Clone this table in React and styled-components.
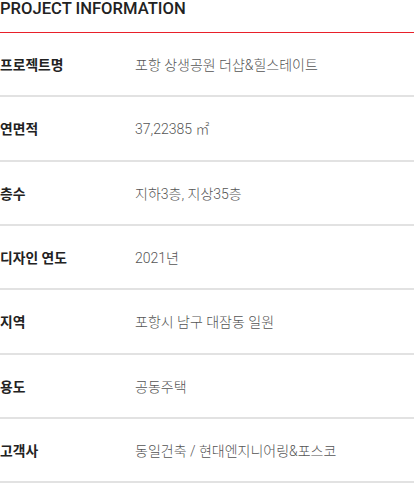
import React from 'react'
import styled, { createGlobalStyle } from 'styled-components'

const GlobalStyle = createGlobalStyle`
body {
  margin: 0;
  background: #fff;
  font-family: Roboto, "Noto Sans CJK KR", sans-serif;
}
`

const Section = styled.section`
width: 414px;
`

const Title = styled.h2`
margin: 0;
height: 33px;
box-sizing: border-box;
font-size: 16.6px;
line-height: 18px;
font-weight: 500;
color: #222;
border-bottom: 1px solid #e8202a;
`

const List = styled.dl`
margin: 0;
`

const Row = styled.div`
display: flex;
align-items: center;
height: 64.33px;
box-sizing: border-box;
border-bottom: 2px solid #e2e2e2;
`

const Label = styled.dt`
width: 135px;
flex-shrink: 0;
font-size: 13.8px;
font-weight: 700;
color: #222;
`

const Value = styled.dd`
margin: 0;
font-size: 14px;
font-weight: 300;
color: #555;
`

const rows = [
  ['프로젝트명', '포항 상생공원 더샵&힐스테이트'],
  ['연면적', '37,22385 ㎡'],
  ['층수', '지하3층, 지상35층'],
  ['디자인 연도', '2021년'],
  ['지역', '포항시 남구 대잠동 일원'],
  ['용도', '공동주택'],
  ['고객사', '동일건축 / 현대엔지니어링&포스코'],
]

const App = () => {
  return (
    <>
      <GlobalStyle />
      <Section>
        <Title>PROJECT INFORMATION</Title>
        <List>
          {rows.map(([label, value]) => (
            <Row key={label}>
              <Label>{label}</Label>
              <Value>{value}</Value>
            </Row>
          ))}
        </List>
      </Section>
    </>
  )
}

export default App
